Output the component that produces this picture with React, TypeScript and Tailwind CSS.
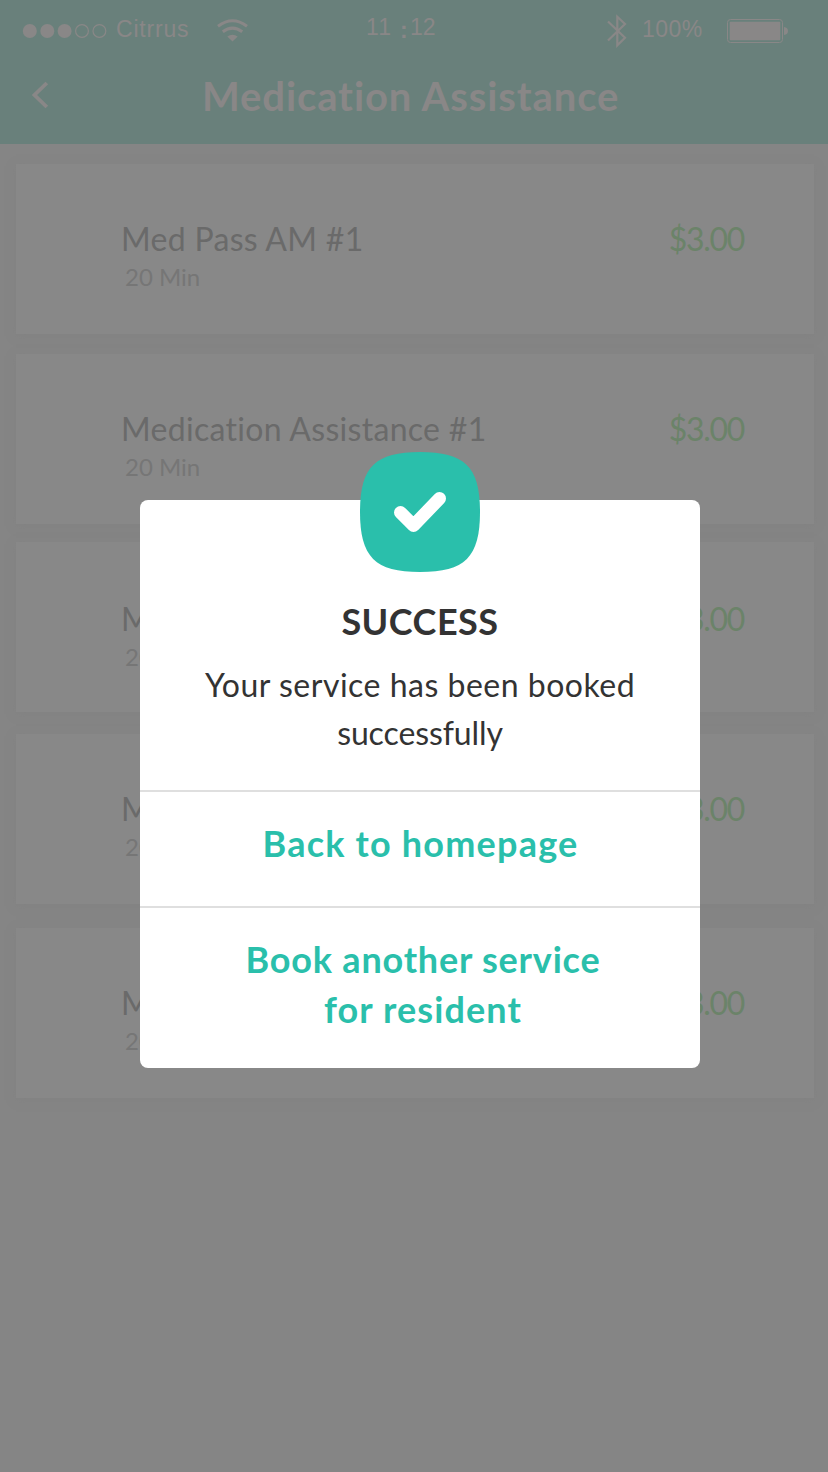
import { clsx } from 'clsx';

const services = [
  { id: 1, title: 'Med Pass AM #1', duration: '20 Min', price: '$3.00', spacing: 'mt-5 pt-14' },
  { id: 2, title: 'Medication Assistance #1', duration: '20 Min', price: '$3.00', spacing: 'mt-5 pt-14' },
  { id: 3, title: 'Med Pass', duration: '20 Min', price: '$3.00', spacing: 'mt-[18px] pt-[58px]' },
  { id: 4, title: 'Med Pass', duration: '20 Min', price: '$3.00', spacing: 'mt-[22px] pt-14' },
  { id: 5, title: 'Med Pass', duration: '20 Min', price: '$3.00', spacing: 'mt-6 pt-14' },
];

function StatusBar() {
  return (
    <div className="flex h-[60px] items-start font-['Liberation_Sans',sans-serif] text-[23px] leading-[30px]">
      <svg className="mt-[23px] ml-[22px] h-4 w-[86px]" viewBox="0 0 86 16" fill="currentColor">
        <circle cx="7.8" cy="8" r="7" />
        <circle cx="25.3" cy="8" r="7" />
        <circle cx="42.6" cy="8" r="7" />
        <g fill="none" stroke="currentColor" strokeWidth="1.2">
          <circle cx="60" cy="8" r="6.4" />
          <circle cx="77.4" cy="8" r="6.4" />
        </g>
      </svg>
      <span className="mt-[14px] ml-2 w-[74px] whitespace-nowrap tracking-[0.8px]">Citrrus</span>
      <svg className="mt-[19px] ml-[27px] h-[23px] w-[31px]" viewBox="0 0 31 23" fill="none" stroke="currentColor" strokeWidth="3">
        <path d="M1 7.2Q15.5 -3.7 30 7.2" />
        <path d="M5.8 12.8Q15.5 5.4 25.2 12.8" />
        <path d="M10.3 17.6Q15.5 13.8 20.7 17.6L15.5 22.5Z" fill="currentColor" stroke="none" />
      </svg>
      <div className="mt-[12px] ml-[118px] flex w-[79px] whitespace-nowrap">
        <span className="w-[34px] tracking-[1.2px]">11</span>
        <span className="w-[10px] pt-[3px] font-bold">:</span>
        <span>12</span>
      </div>
      <svg className="mt-[13px] ml-[162px] h-[36px] w-[20px]" viewBox="0 0 20 36" fill="none" stroke="currentColor" strokeWidth="2.2">
        <path d="M1 8.5L18 24.8L10.3 32.4V3.8L18 11L1 27.5" />
      </svg>
      <span className="mt-[14px] ml-[15px] w-[66px] whitespace-nowrap tracking-[0.5px]">100%</span>
      <svg className="mt-[19px] ml-[19px] h-6 w-[62px]" viewBox="0 0 62 24">
        <rect x="0.5" y="0.5" width="55" height="23" rx="3" fill="none" stroke="currentColor" />
        <rect x="2.7" y="2.7" width="50.6" height="18.6" rx="1" fill="currentColor" />
        <path d="M57 8Q61 8.5 61 12T57 16Z" fill="currentColor" />
      </svg>
    </div>
  );
}

function Header() {
  return (
    <header className="h-36 bg-[#69807b] text-[#898787]">
      <StatusBar />
      <div className="flex items-center pt-[10px]">
        <svg className="mb-[3px] ml-[31px] h-[28px] w-[18px]" viewBox="0 0 18 28" fill="none" stroke="currentColor" strokeWidth="3.8">
          <path d="M15.8 2L3.5 14L15.8 26" />
        </svg>
        <h1 className="ml-[153px] whitespace-nowrap text-[40px] leading-[52px] font-bold tracking-[0.9px]">
          Medication Assistance
        </h1>
      </div>
    </header>
  );
}

function SuccessDialog() {
  return (
    <div className="absolute top-[500px] left-[140px] h-[568px] w-[560px] rounded-lg bg-white text-center">
      <svg className="absolute -top-12 left-[220px] size-[120px]" viewBox="0 0 120 120">
        <path
          d="M60 0C105 0 120 15 120 60S105 120 60 120S0 105 0 60S15 0 60 0Z"
          fill="#2abfab"
        />
        <path
          d="M40.5 60.5L53.5 73.5L79.5 46.5"
          fill="none"
          stroke="#fff"
          strokeWidth="13"
          strokeLinecap="round"
          strokeLinejoin="round"
        />
      </svg>
      <div className="h-[290px] pt-[97px] text-[#333]">
        <h2 className="text-[36px] leading-[48px] font-bold tracking-[0.5px]">SUCCESS</h2>
        <p className="mt-4 text-[32px] leading-[48px] tracking-[0.5px]">
          Your service has been booked
          <br />
          <span className="tracking-[-0.1px]">successfully</span>
        </p>
      </div>
      <button className="block h-[116px] w-full border-t-2 border-[#dfdfdf] pb-3 pl-px text-[36px] font-bold tracking-[1.2px] text-[#2abfab]">
        Back to homepage
      </button>
      <button className="block h-[162px] w-full border-t-2 border-[#dfdfdf] pb-2 pl-[6px] text-[36px] leading-[50px] font-bold tracking-[0.8px] text-[#2abfab]">
        Book another service
        <br />
        <span className="tracking-[1.1px]">for resident</span>
      </button>
    </div>
  );
}

export default function App() {
  return (
    <div className="relative h-[1472px] w-[828px] overflow-hidden bg-[#858585] font-['Lato',sans-serif]">
      <Header />
      <main className="px-4">
        {services.map((service) => (
          <div
            key={service.id}
            className={clsx('flex h-[170px] w-[798px] justify-between bg-[#888] pr-[70px] pl-[105px] shadow-[0_2px_8px_#80808080]', service.spacing)}
          >
            <div>
              <h3 className="text-[32px] leading-[38px] tracking-[0.3px] text-[#6a6a6a]">{service.title}</h3>
              <p className="ml-1 text-[24px] leading-[38px] text-[#767676]">{service.duration}</p>
            </div>
            <span className="text-[32px] leading-[38px] tracking-[-1.3px] text-[#6b8369]">{service.price}</span>
          </div>
        ))}
      </main>
      <SuccessDialog />
    </div>
  );
}
